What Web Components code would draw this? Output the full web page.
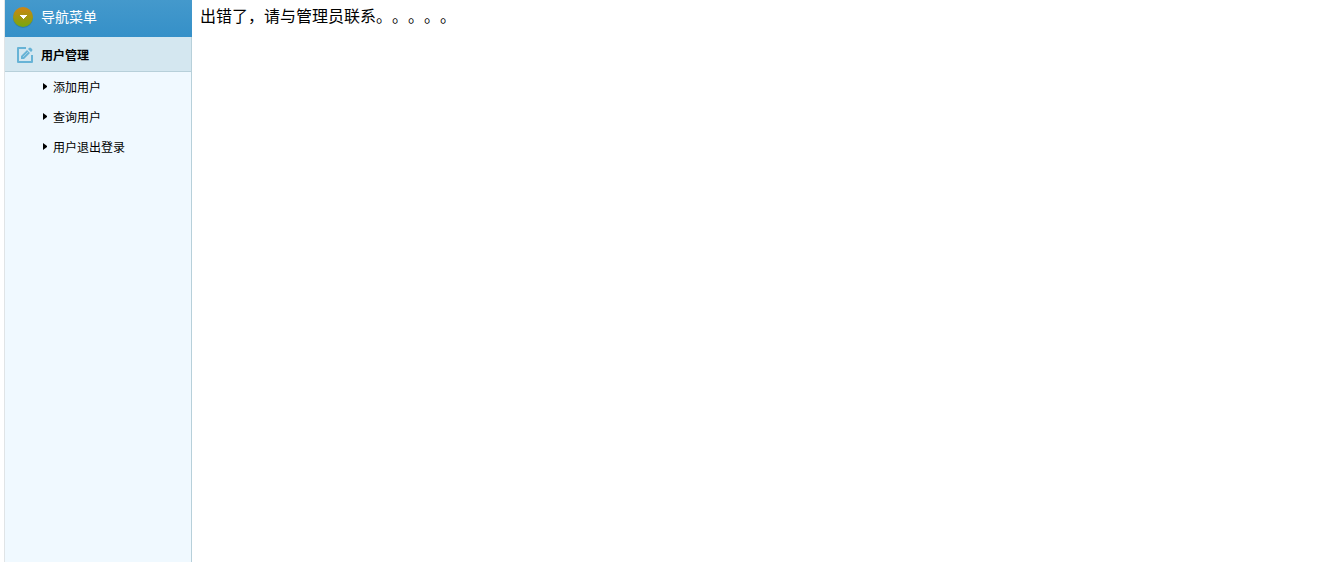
<!DOCTYPE html>
<html lang="zh-CN">
<head>
<meta charset="utf-8">
<title>用户管理</title>
<style>
  html, body { height: 100%; }
  body { margin: 0; background: #fff; color: #000; font-family: "Noto Sans CJK SC", sans-serif; text-spacing-trim: space-all; }
</style>
</head>
<body>
<app-shell>
  <nav-menu slot="side" heading="导航菜单">
    <nav-group heading="用户管理">
      <nav-item href="#add">添加用户</nav-item>
      <nav-item href="#query">查询用户</nav-item>
      <nav-item href="#logout">用户退出登录</nav-item>
    </nav-group>
  </nav-menu>
  <page-message>出错了，请与管理员联系。。。。。</page-message>
</app-shell>
<script>
class Base extends HTMLElement {
  constructor() {
    super();
    this.attachShadow({ mode: "open" });
  }
  connectedCallback() {
    this.shadowRoot.innerHTML = this.render();
  }
}

class AppShell extends Base {
  render() {
    return `<style>
      :host { display: grid; grid-template-columns: 188px 1fr; min-height: 100vh; padding-left: 4px; box-sizing: border-box; }
      main { padding: 6px 8px; min-width: 0; }
    </style>
    <slot name="side"></slot>
    <main><slot></slot></main>`;
  }
}

class NavMenu extends Base {
  render() {
    return `<style>
      :host { display: flex; flex-direction: column; border-left: 1px solid #e0e4e6; background: #f0f9ff; }
      header { display: flex; align-items: center; gap: 8px; height: 37px; padding: 0 8px 2px; box-sizing: border-box;
        background: linear-gradient(#4499cc, #3590c8); color: #fff; }
      svg { display: block; flex: none; }
      h2 { margin: 0 0 4px; font-size: 14px; line-height: 20px; font-weight: 400; }
      nav { flex: 1; border-right: 1px solid #b7d0da; }
    </style>
    <header>
      <svg width="20" height="21" viewBox="0 0 20 21" aria-hidden="true">
        <defs><linearGradient id="g" x1="0" y1="0" x2="0" y2="1">
          <stop offset="0" stop-color="#cf8413"/><stop offset="1" stop-color="#76a80e"/>
        </linearGradient></defs>
        <circle cx="10" cy="11" r="10" fill="#2a709f" opacity=".6"/>
        <circle cx="10" cy="10" r="10" fill="url(#g)"/>
        <path d="M6 8h8l-4 4z" fill="#fff" shape-rendering="crispEdges"/>
      </svg>
      <h2>${this.getAttribute("heading")}</h2>
    </header>
    <nav><slot></slot></nav>`;
  }
}

class NavGroup extends Base {
  render() {
    return `<style>
      :host { display: block; }
      h3 { display: flex; align-items: center; gap: 8px; height: 35px; box-sizing: border-box; margin: 0; padding: 1px 12px 0;
        background: #d4e7f0; border-bottom: 1px solid #b7d0da; font-size: 12px; line-height: 18px; font-weight: 700; }
      svg { display: block; flex: none; }
    </style>
    <h3>
      <svg width="16" height="16" viewBox="0 0 16 16" aria-hidden="true">
        <path d="M9 1H1v14h14V8" fill="none" stroke="#67b3d6" stroke-width="2" stroke-linejoin="round"/>
        <path d="M4 12V9l6-6 3 3-6 6zM11 2l1-1q1-1 2 0l1 1q1 1 0 2l-1 1z" fill="#67b3d6"/>
        <path d="M6 10l5-5" stroke="#a3cfe3"/>
      </svg>
      ${this.getAttribute("heading")}
    </h3>
    <slot></slot>`;
  }
}

class NavItem extends Base {
  render() {
    return `<style>
      :host { display: block; }
      a { display: flex; align-items: center; gap: 6px; height: 30px; padding-left: 38px; color: #000;
        font-size: 12px; line-height: 18px; text-decoration: none; }
      svg { display: block; flex: none; }
    </style>
    <a href="${this.getAttribute("href")}">
      <svg width="4" height="8" viewBox="0 0 4 8" aria-hidden="true"><path d="M0 0l4 3v1l-4 3z"/></svg>
      <span><slot></slot></span>
    </a>`;
  }
}

class PageMessage extends Base {
  render() {
    return `<style>
      :host { display: block; }
      p { margin: 0; font-size: 16px; line-height: 18px; }
    </style>
    <p><slot></slot></p>`;
  }
}

customElements.define("app-shell", AppShell);
customElements.define("nav-menu", NavMenu);
customElements.define("nav-group", NavGroup);
customElements.define("nav-item", NavItem);
customElements.define("page-message", PageMessage);
</script>
</body>
</html>
